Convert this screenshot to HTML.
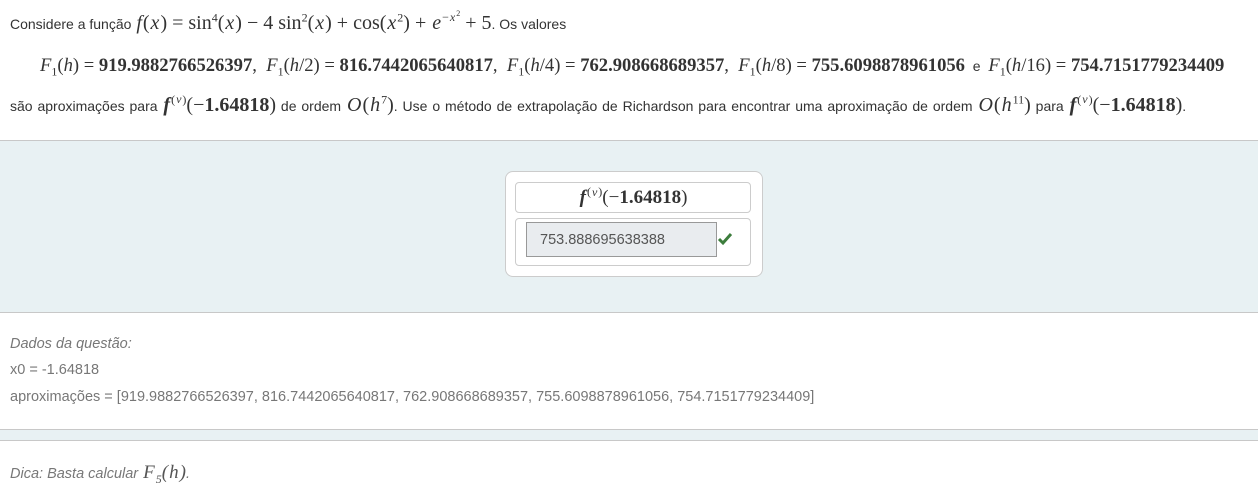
<!DOCTYPE html>
<html><head><meta charset="utf-8"><style>
body{margin:0;width:1258px;height:498px;overflow:hidden;background:#fff;font-family:"Liberation Sans",sans-serif;font-size:14px;color:#333;}
.m{font-family:"Liberation Serif",serif;font-size:20px;}
.m i{padding:0 1px;}
.m2{font-family:"Liberation Serif",serif;font-size:18.6px;}
.ab{position:absolute;white-space:nowrap;}
sup,sub{font-size:12px;line-height:0;}
.g{color:#777;font-size:14.5px;}
</style></head><body>
<div class="ab" style="left:10px;top:12px;">Considere a função <span class="m"><i>f</i>(<i>x</i>) = sin<sup>4</sup>(<i>x</i>) − 4 sin<sup>2</sup>(<i>x</i>) + cos(<i>x</i><sup>2</sup>) + <i>e</i><sup>−<i>x</i><sup style="font-size:8px">2</sup></sup> + 5</span>. Os valores</div>
<div class="ab" style="left:40px;top:55px;"><span class="m2"><i>F</i><sub>1</sub>(<i>h</i>) = <b>919.9882766526397</b>,&nbsp; <i>F</i><sub>1</sub>(<i>h</i>/2) = <b>816.7442065640817</b>,&nbsp; <i>F</i><sub>1</sub>(<i>h</i>/4) = <b>762.908668689357</b>,&nbsp; <i>F</i><sub>1</sub>(<i>h</i>/8) = <b>755.6098878961056</b></span>&nbsp; e &nbsp;<span class="m2"><i>F</i><sub>1</sub>(<i>h</i>/16) = <b>754.7151779234409</b></span></div>
<div class="ab" style="left:10px;top:94px;word-spacing:1px;">são aproximações para <span class="m"><i><b>f</b></i><sup>(<i>v</i>)</sup>(−<b>1.64818</b>)</span> de ordem <span class="m"><i>O</i>(<i>h</i><sup>7</sup>)</span>. Use o método de extrapolação de Richardson para encontrar uma aproximação de ordem <span class="m"><i>O</i>(<i>h</i><sup>11</sup>)</span> para <span class="m"><i><b>f</b></i><sup>(<i>v</i>)</sup>(−<b>1.64818</b>)</span>.</div>
<div class="ab" style="left:0;top:140px;width:1258px;height:171px;background:#e8f1f3;border-top:1px solid #c8c8c8;border-bottom:1px solid #c8c8c8;"></div>
<div class="ab" style="left:505px;top:171px;width:256px;height:104px;background:#fff;border:1px solid #ccc;border-radius:8px;"></div>
<div class="ab" style="left:515px;top:182px;width:234px;height:29px;border:1px solid #ccc;border-radius:4px;text-align:center;line-height:30px;"><span class="m" style="font-size:19px"><i><b>f</b></i><sup>(<i>v</i>)</sup>(−<b>1.64818</b>)</span></div>
<div class="ab" style="left:515px;top:218px;width:234px;height:46px;border:1px solid #ccc;border-radius:4px;"></div>
<div class="ab" style="left:526px;top:222px;width:191px;height:35px;background:#e9ecef;border:1px solid #999;line-height:35px;padding-left:13px;box-sizing:border-box;color:#555;font-size:14.5px;">753.888695638388</div>
<svg class="ab" style="left:717px;top:232px" width="16" height="14" viewBox="0 0 16 14"><path d="M2 7 L6 11 L14 2" stroke="#3c7d3c" stroke-width="3" fill="none"/></svg>
<div class="ab g" style="left:10px;top:336px;font-style:italic;">Dados da questão:</div>
<div class="ab g" style="left:10px;top:362px;">x0 = -1.64818</div>
<div class="ab g" style="left:10px;top:389px;">aproximações = [919.9882766526397, 816.7442065640817, 762.908668689357, 755.6098878961056, 754.7151779234409]</div>
<div class="ab" style="left:0;top:429px;width:1258px;height:10px;background:#e8f1f3;border-top:1px solid #c8c8c8;border-bottom:1px solid #c8c8c8;"></div>
<div class="ab g" style="left:10px;top:462px;font-style:italic;">Dica: Basta calcular <span class="m" style="color:#555;font-size:19px"><i>F</i><sub>5</sub>(<i>h</i>)</span>.</div>
</body></html>
